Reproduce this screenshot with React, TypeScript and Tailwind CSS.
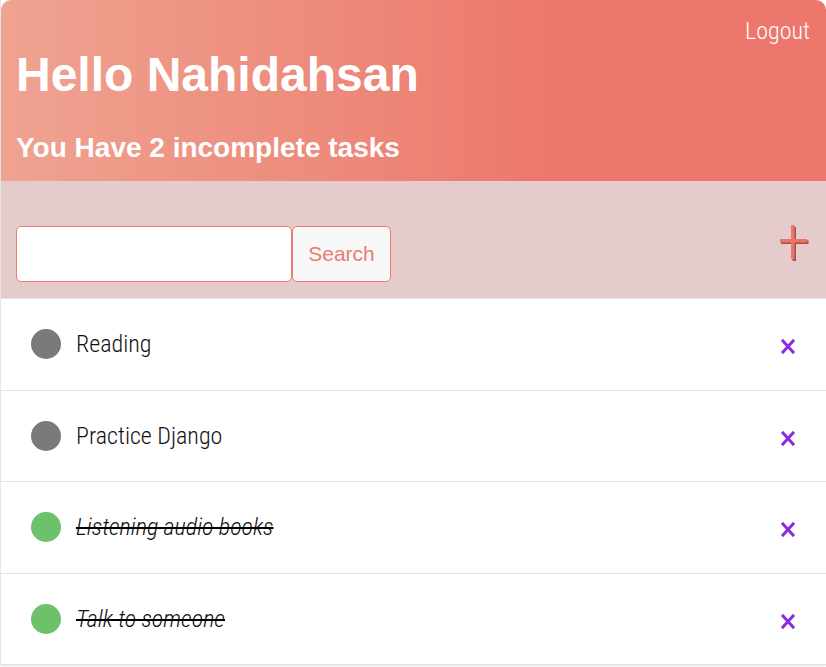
import React from "react";

type Task = { title: string; done: boolean };

const tasks: Task[] = [
  { title: "Reading", done: false },
  { title: "Practice Django", done: false },
  { title: "Listening audio books", done: true },
  { title: "Talk to someone", done: true },
];

const arial = "font-['Liberation_Sans',Arial,sans-serif]";
const roboto = "font-['Roboto','Liberation_Sans',sans-serif]";

const PlusIcon = () => (
  <svg width="29" height="36" viewBox="0 0 29 36">
    {/* shadow */}
    <rect x="12.5" y="2" width="3.5" height="34" fill="#a5524c" />
    <rect x="1" y="15.5" width="27.5" height="3.5" fill="#a5524c" />
    {/* plus */}
    <rect x="11" y="0" width="3.5" height="34" fill="#ec7469" />
    <rect x="0" y="14" width="27" height="3.5" fill="#ec7469" />
  </svg>
);

const CloseIcon = () => (
  <svg width="14" height="15" viewBox="0 0 14 15" className="mt-[5px]">
    <path
      d="M2 2 L12 13 M12 2 L2 13"
      stroke="#8a2be2"
      strokeWidth="3"
      strokeLinecap="square"
    />
  </svg>
);

export default function App() {
  return (
    <div className="min-h-screen bg-white">
      <div className="border-l border-[#e6e6e6] shadow-[0_2px_3px_rgba(0,0,0,0.08)]">
        {/* Header */}
        <div className="rounded-t-[10px] bg-[linear-gradient(to_right,#efa391_0%,#ed8a7b_40%,#ed766c_68%,#ed776d_100%)] pt-[20px] pb-[19px] pl-[15px] pr-4">
          <div className="flex justify-end">
            <span className={`${roboto} font-light font-stretch-condensed text-[24px] leading-[22px] text-white`}>
              Logout
            </span>
          </div>
          <h1 className={`${arial} mt-[9px] text-[48px] font-bold leading-[48px] text-white`}>
            Hello Nahidahsan
          </h1>
          <h3 className={`${arial} mt-[35px] text-[28px] font-bold leading-[28px] text-white`}>
            You Have 2 incomplete tasks
          </h3>
        </div>

        {/* Search bar */}
        <div className="flex items-start justify-between bg-[#e5cbcb] pt-[44px] pb-[16px] pl-[15px] pr-[16px] border-b border-[#e2e2e2]">
          <form className="mt-[1px] flex">
            <input
              type="text"
              className="h-[56px] w-[276px] rounded-[5px] border border-[#ec7b70] bg-white px-3 outline-none"
            />
            <button
              type="button"
              className={`${arial} h-[56px] w-[99px] rounded-[5px] border border-[#ec7b70] bg-[#f8f8f8] text-[21px] text-[#ec7b70]`}
            >
              Search
            </button>
          </form>
          <div className="pr-[1px]">
            <PlusIcon />
          </div>
        </div>

        {/* Task list */}
        <div>
          {tasks.map((task, i) => (
            <div
              key={i}
              className="flex h-[91.5px] items-center justify-between border-b border-[#e2e2e2] pl-[30px] pr-[31px]"
            >
              <div className="flex items-center gap-[15px]">
                <span
                  className={`block h-[30px] w-[30px] rounded-full ${
                    task.done ? "bg-[#6cc16a]" : "bg-[#7a7a7a]"
                  }`}
                />
                <span
                  className={`${roboto} font-light font-stretch-condensed text-[24px] text-[#111] ${
                    task.done ? "italic line-through decoration-black decoration-2" : ""
                  }`}
                >
                  {task.title}
                </span>
              </div>
              <CloseIcon />
            </div>
          ))}
        </div>
      </div>
    </div>
  );
}
